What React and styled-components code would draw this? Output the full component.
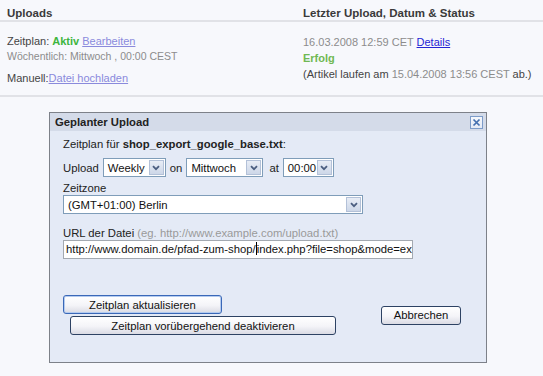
import React from 'react'
import styled, { createGlobalStyle } from 'styled-components'

const GlobalStyle = createGlobalStyle`
  html, body {
    margin: 0;
    padding: 0;
    background: #f7f8fc;
    font-family: "Liberation Sans", Arial, sans-serif;
    font-size: 11px;
    color: #444;
  }
`

const Page = styled.div`
  width: 543px;
  height: 376px;
  overflow: hidden;
`

const Table = styled.div`
  display: grid;
  grid-template-columns: 296px 1fr;
`

const HeadCell = styled.div`
  height: 22px;
  box-sizing: border-box;
  font-weight: bold;
  font-size: 11.5px;
  line-height: 14px;
  color: #3a3a3a;
  padding: 6px 0 0 7px;
  border-bottom: 2px solid #e1e2e7;
`

const BodyCell = styled.div`
  height: 75px;
  box-sizing: border-box;
  padding: 12px 0 0 7px;
  border-bottom: 2px solid #e1e2e7;
`

const Line = styled.div`
  color: ${p => (p.$muted ? '#8c8c8c' : '#444')};
  font-size: ${p => (p.$muted ? '10.5px' : '11px')};
  line-height: ${p => p.$lh || 15}px;
  margin-top: ${p => p.$gap || 0}px;
`

const Status = styled.span`
  font-weight: bold;
  color: ${p => p.$color};
`

const Link = styled.a`
  color: ${p => (p.$visited ? '#8a8adc' : '#2424d4')};
  text-decoration: underline;
  cursor: pointer;
`

const Gray = styled.span`
  color: ${p => (p.$light ? '#9a9a9a' : '#8c8c8c')};
`

const Dialog = styled.div`
  margin: 15px 0 0 49px;
  width: 438px;
  height: 251px;
  box-sizing: border-box;
  border: 1px solid #7d8189;
  background: #e4eaf6;
  font-size: 11.3px;
  color: #222;
`

const TitleBar = styled.div`
  height: 18px;
  background: #d4dbe9;
  display: flex;
  align-items: center;
  justify-content: space-between;
  padding: 0 3px 0 5px;
  font-weight: bold;
  font-size: 11.3px;
  color: #222;
`

const CloseBox = styled.div`
  width: 13px;
  height: 13px;
  box-sizing: border-box;
  border: 1px solid #7d9cc9;
  background: linear-gradient(#f6f8fc, #e4eaf5);
  display: flex;
  align-items: center;
  justify-content: center;
`

const Body = styled.div`
  padding: 6px 0 0 13px;
  display: flex;
  flex-direction: column;
`

const Row = styled.div`
  display: flex;
  align-items: center;
  gap: 4px;
  margin-top: ${p => p.$gap || 0}px;
`

const Word = styled.span`
  margin-left: ${p => p.$pad || 0}px;
`

const Label = styled.div`
  margin-top: ${p => p.$gap || 0}px;
  line-height: ${p => p.$lh || 14}px;
  white-space: nowrap;
`

const SelectBox = styled.div`
  width: ${p => p.$width}px;
  height: 19px;
  box-sizing: border-box;
  border: 1px solid #7f9db9;
  background: #fff;
  display: flex;
  align-items: center;
  padding: 1px;
`

const SelectValue = styled.div`
  flex: 1;
  padding-left: 3px;
  white-space: nowrap;
  overflow: hidden;
  color: #111;
`

const Arrow = styled.div`
  width: 15px;
  height: 15px;
  box-sizing: border-box;
  border: 1px solid #b3c1d8;
  background: linear-gradient(#e8edf6, #cdd7e8);
  display: flex;
  align-items: center;
  justify-content: center;
`

const TextInput = styled.div`
  width: 350px;
  height: 19px;
  box-sizing: border-box;
  border: 1px solid #a3a9b1;
  background: #fff;
  padding: 0 2px;
  line-height: 17px;
  white-space: nowrap;
  overflow: hidden;
  color: #111;
`

const Caret = styled.span`
  display: inline-block;
  width: 0;
  height: 13px;
  border-left: 1px solid #000;
  vertical-align: -2px;
`

const Buttons = styled.div`
  margin-top: 36px;
  display: flex;
  align-items: center;
`

const ButtonStack = styled.div`
  display: flex;
  flex-direction: column;
  align-items: flex-start;
  gap: 2px;
`

const Button = styled.div`
  width: ${p => p.$width}px;
  height: 19px;
  box-sizing: border-box;
  margin-left: ${p => p.$indent || 0}px;
  border: 1px solid ${p => (p.$primary ? '#3a68b8' : '#2d4263')};
  box-shadow: ${p => (p.$primary ? 'inset 0 0 0 1px #b4cbef' : 'none')};
  border-radius: 3px;
  background: linear-gradient(#ffffff, #f4f4f8 55%, #dadbe4);
  display: flex;
  align-items: center;
  justify-content: center;
  color: #111;
`

const Chevron = () => (
  <svg width="8" height="6" viewBox="0 0 8 6">
    <path d="M1 1.2 L4 4.2 L7 1.2" fill="none" stroke="#4b5e80" strokeWidth="1.8" />
  </svg>
)

const Select = ({ width, value }) => (
  <SelectBox $width={width}>
    <SelectValue>{value}</SelectValue>
    <Arrow>
      <Chevron />
    </Arrow>
  </SelectBox>
)

export default function App() {
  return (
    <Page>
      <GlobalStyle />
      <Table>
        <HeadCell>Uploads</HeadCell>
        <HeadCell>Letzter Upload, Datum &amp; Status</HeadCell>
        <BodyCell>
          <Line>
            Zeitplan: <Status $color="#3db53d">Aktiv</Status> <Link $visited>Bearbeiten</Link>
          </Line>
          <Line $muted $lh={14}>Wöchentlich: Mittwoch , 00:00 CEST</Line>
          <Line $gap={8}>
            Manuell:<Link $visited>Datei hochladen</Link>
          </Line>
        </BodyCell>
        <BodyCell>
          <Line $lh={16}>
            <Gray>16.03.2008 12:59 CET</Gray> <Link>Details</Link>
          </Line>
          <Line $lh={16}>
            <Status $color="#70b853">Erfolg</Status>
          </Line>
          <Line $lh={16}>
            (Artikel laufen am <Gray>15.04.2008 13:56 CEST</Gray> ab.)
          </Line>
        </BodyCell>
      </Table>

      <Dialog>
        <TitleBar>
          Geplanter Upload
          <CloseBox>
            <svg width="9" height="9" viewBox="0 0 9 9">
              <path d="M1.5 1.5 L7.5 7.5 M7.5 1.5 L1.5 7.5" stroke="#4470b0" strokeWidth="1.7" />
            </svg>
          </CloseBox>
        </TitleBar>
        <Body>
          <Label>
            Zeitplan für <b>shop_export_google_base.txt</b>:
          </Label>
          <Row $gap={7}>
            Upload
            <Select width={63} value="Weekly" />
            on
            <Select width={77} value="Mittwoch" />
            <Word $pad={2}>at</Word>
            <Select width={51} value="00:00" />
          </Row>
          <Label $gap={5} $lh={13}>Zeitzone</Label>
          <Row>
            <Select width={300} value="(GMT+01:00) Berlin" />
          </Row>
          <Label $gap={12}>
            URL der Datei <Gray $light>(eg. http://www.example.com/upload.txt)</Gray>
          </Label>
          <TextInput>
            http://www.domain.de/pfad-zum-shop/<Caret />index.php?file=shop&amp;mode=export
          </TextInput>
          <Buttons>
            <ButtonStack>
              <Button $primary $width={159}>Zeitplan aktualisieren</Button>
              <Button $width={266} $indent={7}>Zeitplan vorübergehend deaktivieren</Button>
            </ButtonStack>
            <Button $width={80} $indent={45}>Abbrechen</Button>
          </Buttons>
        </Body>
      </Dialog>
    </Page>
  )
}
